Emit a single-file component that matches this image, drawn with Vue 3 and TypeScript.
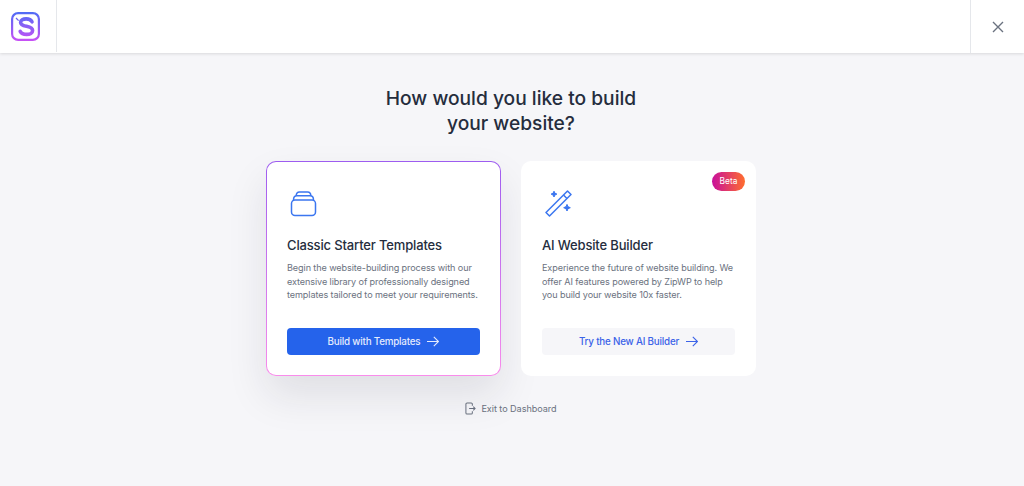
<script setup lang="ts">
// Onboarding step: pick how the website gets built.
interface BuildOption {
  title: string;
  text: string;
  action: string;
  icon: "stack" | "wand";
  selected?: boolean;
  badge?: string;
}

const options: BuildOption[] = [
  {
    title: "Classic Starter Templates",
    text: "Begin the website-building process with our extensive library of professionally designed templates tailored to meet your requirements.",
    action: "Build with Templates",
    icon: "stack",
    selected: true,
  },
  {
    title: "AI Website Builder",
    text: "Experience the future of website building. We offer AI features powered by ZipWP to help you build your website 10x faster.",
    action: "Try the New AI Builder",
    icon: "wand",
    badge: "Beta",
  },
];
</script>

<template>
  <div class="page">
    <header class="topbar">
      <div class="logo-cell">
        <svg width="29" height="29" viewBox="0 0 29 29" fill="none">
          <defs>
            <linearGradient id="logo-grad" x1="14" y1="0" x2="14" y2="29" gradientUnits="userSpaceOnUse">
              <stop offset="0" stop-color="#4f6cf5" />
              <stop offset="1" stop-color="#c850f5" />
            </linearGradient>
          </defs>
          <rect x="1.1" y="1.1" width="26.8" height="26.8" rx="6" stroke="url(#logo-grad)" stroke-width="2.2" />
          <path
            d="M21 9.8C20 7.8 17.8 6.9 15.2 6.9c-3.2 0-5.6 1.3-5.6 3.5 0 5.2 12 2.6 12 8 0 2.6-2.7 4-6 4-3 0-5.4-1-6.4-3"
            stroke="url(#logo-grad)"
            stroke-width="3.6"
            stroke-linecap="round"
          />
          <path d="M5 6l2.6 2.6" stroke="#6a62f2" stroke-width="1.3" />
        </svg>
      </div>
      <div class="close-cell">
        <svg width="12" height="12" viewBox="0 0 12 12" fill="none" stroke="#6b7280" stroke-width="1.4">
          <path d="M1 1l10 10M11 1L1 11" />
        </svg>
      </div>
    </header>

    <main class="content">
      <h1 class="heading">How would you like to build<br />your website?</h1>

      <div class="cards">
        <section
          v-for="opt in options"
          :key="opt.title"
          class="card"
          :class="{ selected: opt.selected }"
        >
          <span v-if="opt.badge" class="badge">{{ opt.badge }}</span>
          <svg
            v-if="opt.icon === 'stack'"
            class="card-icon"
            width="30"
            height="30"
            viewBox="0 0 30 30"
            fill="none"
            stroke="#3b76f0"
            stroke-width="1.5"
            stroke-linejoin="round"
          >
            <rect x="4.5" y="12" width="24" height="15.5" rx="3.5" />
            <path d="M6.5 12c0-2.6 1.2-4.2 3.4-4.2h13.2c2.2 0 3.4 1.6 3.4 4.2" />
            <path d="M9.2 7.8c0-2.4 1.2-3.8 3.2-3.8h8.2c2 0 3.2 1.4 3.2 3.8" />
          </svg>
          <svg
            v-else
            class="card-icon"
            width="30"
            height="30"
            viewBox="-1 0 30 30"
            fill="none"
            stroke="#3b76f0"
            stroke-width="1.5"
            stroke-linejoin="round"
          >
            <path d="M3 24.5l3.5 3.5L28 6.5 24.5 3z" />
            <path d="M20.5 7l3.5 3.5" />
            <path d="M11 3.2l.9 2 2 .9-2 .9-.9 2-.9-2-2-.9 2-.9z" fill="#3b76f0" stroke-width="1" />
            <path d="M24 16.4l1 2.3 2.3 1-2.3 1-1 2.3-1-2.3-2.3-1 2.3-1z" fill="#3b76f0" stroke-width="1" />
          </svg>
          <h2 class="card-title">{{ opt.title }}</h2>
          <p class="card-text">{{ opt.text }}</p>
          <button class="card-btn" :class="{ primary: opt.selected }">
            {{ opt.action }}
            <svg width="12" height="11" viewBox="0 0 12 11" fill="none" stroke="currentColor" stroke-width="1.1">
              <path d="M0 5.5h11.5M6.8.8l4.7 4.7-4.7 4.7" />
            </svg>
          </button>
        </section>
      </div>

      <a class="exit">
        <svg width="11" height="13" viewBox="0 0 12 14" fill="none" stroke="#6b7280" stroke-width="1.1">
          <path d="M8 4V2.2C8 1.5 7.5 1 6.8 1H2.2C1.5 1 1 1.5 1 2.2v9.6c0 .7.5 1.2 1.2 1.2h4.6c.7 0 1.2-.5 1.2-1.2V10" />
          <path d="M4.5 7H11M9 5l2 2-2 2" />
        </svg>
        Exit to Dashboard
      </a>
    </main>
  </div>
</template>

<style>
html,
body {
  margin: 0;
  background: #f6f6f9;
}
</style>

<style scoped>
.page {
  height: 486px;
  overflow: hidden;
  background: #f6f6f9;
  font-family: Inter, "Noto Sans", sans-serif;
  color: #1f2937;
}
.topbar {
  height: 53px;
  display: flex;
  justify-content: space-between;
  background: #fff;
  box-shadow: 0 1px 3px rgba(0, 0, 0, 0.12);
}
.logo-cell {
  width: 57px;
  height: 52px;
  box-sizing: border-box;
  padding: 12px 0 0 11px;
  border-right: 1px solid #e5e7eb;
}
.close-cell {
  width: 53px;
  display: flex;
  align-items: center;
  justify-content: center;
  border-left: 1px solid #e5e7eb;
}
.content {
  display: flex;
  flex-direction: column;
  align-items: center;
  padding: 33px 2px 0 0;
}
.heading {
  margin: 0;
  font-size: 19.2px;
  line-height: 25px;
  font-weight: 500;
  text-align: center;
  color: #252d3d;
}
.cards {
  display: flex;
  gap: 20px;
  margin-top: 25px;
}
.card {
  position: relative;
  width: 235px;
  height: 215px;
  box-sizing: border-box;
  padding: 27px 21px 0;
  background: #fff;
  border-radius: 10px;
  display: flex;
  flex-direction: column;
}
.card.selected {
  border: 1px solid transparent;
  padding: 26px 20px 0;
  background:
    linear-gradient(#fff, #fff) padding-box,
    linear-gradient(180deg, #9d5cf0, #f98ceb) border-box;
  box-shadow: 0 20px 40px rgba(30, 30, 50, 0.1);
}
.badge {
  position: absolute;
  top: 11px;
  right: 11px;
  width: 33px;
  height: 19px;
  line-height: 19px;
  text-align: center;
  border-radius: 10px;
  font-size: 8.4px;
  color: #fff;
  background: linear-gradient(90deg, #c8109b, #ff6d2e);
}
.card-icon {
  display: block;
}
.card-title {
  margin: 18px 0 0;
  font-size: 13px;
  line-height: 18px;
  font-weight: 500;
  letter-spacing: -0.15px;
  color: #252d3d;
}
.card-text {
  margin: 7px -2px 0 0;
  font-size: 9.1px;
  line-height: 13.5px;
  letter-spacing: -0.1px;
  color: #6b7280;
}
.card-btn {
  margin-top: auto;
  margin-bottom: 21px;
  height: 27px;
  display: flex;
  align-items: center;
  justify-content: center;
  gap: 7px;
  border: 0;
  border-radius: 4px;
  font: inherit;
  font-size: 9.8px;
  font-weight: 500;
  letter-spacing: -0.2px;
  color: #3b63e8;
  background: #f6f6f9;
}
.card-btn.primary {
  margin-bottom: 20px;
  color: #e4ebfd;
  background: #2563eb;
}
.exit {
  display: flex;
  align-items: center;
  gap: 5px;
  margin-top: 26px;
  font-size: 9.1px;
  letter-spacing: -0.05px;
  color: #6b7280;
}
</style>
